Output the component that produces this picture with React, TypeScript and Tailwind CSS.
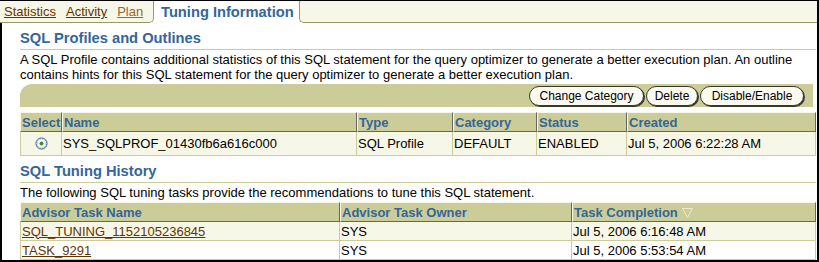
import React from 'react';

function Radio() {
  return (
    <svg width="13" height="13" viewBox="0 0 13 13" className="block mx-auto">
      <circle cx="6.5" cy="6.5" r="5.5" fill="#fff" stroke="#1f4f7f" />
      <circle cx="6.5" cy="6.5" r="4.3" fill="none" stroke="#d0d6dc" />
      <circle cx="6.5" cy="6.5" r="2" fill="#2a9a2a" />
    </svg>
  );
}

function SortDown() {
  return (
    <svg width="11" height="10" viewBox="0 0 11 10" className="inline-block align-[-1px] ml-[4px]">
      <polygon points="0.5,0.5 10.5,0.5 5.5,9.5" fill="none" stroke="#ecebd0" />
    </svg>
  );
}

function Btn({ children, className }: { children: React.ReactNode; className: string }) {
  return (
    <button
      className={`h-[20px] rounded-full border border-[#3a3a2a] bg-[#fafaf0] shadow-[1px_1px_0_#3a3a2a] text-[12px] leading-[14px] text-black ${className}`}
    >
      {children}
    </button>
  );
}

const th =
  'h-[20px] bg-[#cccc99] border border-t-[#f7f7e7] border-l-[#f7f7e7] border-r-[#666] border-b-[#666] text-left align-middle pl-[1px] pt-[1px] font-bold text-[#336699] text-[13px] leading-[16px] whitespace-nowrap';
const td = 'border-r border-b border-[#cccc99] pl-[1px] text-[13px] leading-[15px] align-middle whitespace-nowrap';

export default function App() {
  return (
    <div className="w-[819px] h-[262px] flex flex-col bg-white border-t border-r-2 border-b-2 border-black overflow-hidden font-['Liberation_Sans',Arial,sans-serif] text-black">
      {/* tabs */}
      <div className="flex h-[22px] shrink-0">
        <div className="w-[154px] flex gap-[10px] pl-[4px] pt-[3px] bg-[#f7f7e7] border-b border-r border-[#999966] rounded-br-[5px] text-[13px] leading-[15px]">
          <a href="#" className="text-[#663300] underline">Statistics</a>
          <a href="#" className="text-[#663300] underline">Activity</a>
          <a href="#" className="text-[#996633] underline">Plan</a>
        </div>
        <div className="w-[145px] bg-white pl-[7px] pt-[3px] text-[14.7px] leading-[17px] font-bold text-[#336699] whitespace-nowrap">
          Tuning Information
        </div>
        <div className="flex-1 bg-[#f7f7e7] border-b border-l border-[#999966] rounded-bl-[5px]" />
      </div>

      <div className="flex-1 border-l-2 border-black pl-[18px] pr-[1px]">
        <h2 className="mt-[7px] pb-[2px] border-b border-[#cccc99] text-[14.7px] leading-[17px] font-bold text-[#336699]">
          SQL Profiles and Outlines
        </h2>
        <p className="mt-[2px] text-[13px] leading-[15px]">
          A SQL Profile contains additional statistics of this SQL statement for the query optimizer to generate a better execution plan. An outline contains hints for this SQL statement for the query optimizer to generate a better execution plan.
        </p>
        <div className="mt-[2px] mr-[3px] h-[23px] bg-[#cccc99] rounded-tl-[12px] flex items-center justify-end gap-[2px] pr-[9px]">
          <Btn className="w-[115px]">Change Category</Btn>
          <Btn className="w-[52px]">Delete</Btn>
          <Btn className="w-[104px]">Disable/Enable</Btn>
        </div>

        <table className="mt-[5px] w-full table-fixed border-separate border-spacing-0">
          <colgroup>
            <col className="w-[42px]" />
            <col className="w-[295px]" />
            <col className="w-[96px]" />
            <col className="w-[84px]" />
            <col className="w-[90px]" />
            <col />
          </colgroup>
          <thead>
            <tr>
              <th className={th}>Select</th>
              <th className={th}>Name</th>
              <th className={th}>Type</th>
              <th className={th}>Category</th>
              <th className={th}>Status</th>
              <th className={th}>Created</th>
            </tr>
          </thead>
          <tbody>
            <tr className="bg-[#f7f7e7]">
              <td className={`${td} border-l h-[24px]`}><Radio /></td>
              <td className={td}>SYS_SQLPROF_01430fb6a616c000</td>
              <td className={td}>SQL Profile</td>
              <td className={td}>DEFAULT</td>
              <td className={td}>ENABLED</td>
              <td className={td}>Jul 5, 2006 6:22:28 AM</td>
            </tr>
          </tbody>
        </table>

        <h2 className="mt-[7px] pb-[2px] border-b border-[#cccc99] text-[14.7px] leading-[17px] font-bold text-[#336699]">
          SQL Tuning History
        </h2>
        <p className="mt-[2px] text-[13px] leading-[15px]">
          The following SQL tuning tasks provide the recommendations to tune this SQL statement.
        </p>

        <table className="mt-[2px] w-full table-fixed border-separate border-spacing-0">
          <colgroup>
            <col className="w-[320px]" />
            <col className="w-[232px]" />
            <col />
          </colgroup>
          <thead>
            <tr>
              <th className={th}>Advisor Task Name</th>
              <th className={th}>Advisor Task Owner</th>
              <th className={th}>
                Task Completion
                <SortDown />
              </th>
            </tr>
          </thead>
          <tbody>
            <tr className="bg-[#f7f7e7]">
              <td className={`${td} border-l h-[19px]`}>
                <a href="#" className="text-[#663300] underline">SQL_TUNING_1152105236845</a>
              </td>
              <td className={td}>SYS</td>
              <td className={td}>Jul 5, 2006 6:16:48 AM</td>
            </tr>
            <tr className="bg-white">
              <td className={`${td} border-l h-[19px]`}>
                <a href="#" className="text-[#663300] underline">TASK_9291</a>
              </td>
              <td className={td}>SYS</td>
              <td className={td}>Jul 5, 2006 5:53:54 AM</td>
            </tr>
          </tbody>
        </table>
      </div>
    </div>
  );
}
